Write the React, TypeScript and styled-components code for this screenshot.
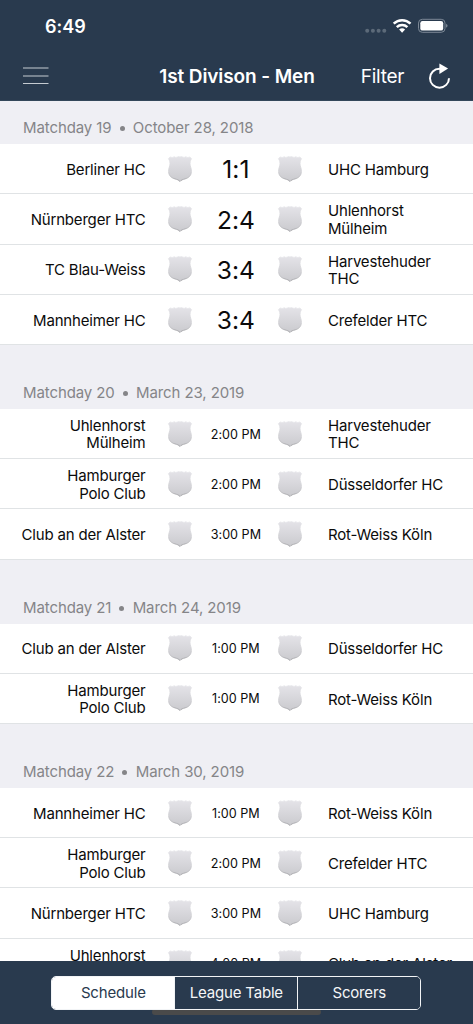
import React from 'react';
import styled, { createGlobalStyle } from 'styled-components';

const GlobalStyle = createGlobalStyle`
  * { box-sizing: border-box; }
  body { margin: 0; background: #efeff4; }
`;

const navy = '#293a4e';

const Screen = styled.div`
  width: 473px;
  height: 1024px;
  overflow: hidden;
  display: flex;
  flex-direction: column;
  background: #efeff4;
  color: #0b0b0b;
  font-family: Inter, 'Liberation Sans', sans-serif;
  font-feature-settings: 'calt' 0;
`;

const Header = styled.header`
  flex: none;
  height: 101px;
  background: ${navy};
  color: #fff;
  border-bottom: 1px solid #33475a;
`;

const StatusBar = styled.div`
  height: 51px;
  padding: 2px 25px 0 45px;
  display: flex;
  align-items: center;
  justify-content: space-between;
`;

const Clock = styled.span`
  font-size: 18px;
  font-weight: 600;
  letter-spacing: 0;
`;

const NavBar = styled.div`
  height: 49px;
  padding: 0 22px 0 23px;
  display: grid;
  grid-template-columns: 92px 244px 1fr auto;
  align-items: center;
`;

const Title = styled.h1`
  margin: 0;
  padding-top: 2px;
  text-align: center;
  white-space: nowrap;
  font-size: 19px;
  font-weight: 600;
  letter-spacing: -0.1px;
`;

const FilterLabel = styled.span`
  font-size: 19px;
  letter-spacing: -0.25px;
  padding: 2px 0 0 1.7px;
`;

const List = styled.main`
  flex: 1;
  min-height: 0;
  overflow: hidden;
`;

const SectionHeader = styled.div<{ $first?: boolean }>`
  height: ${p => (p.$first ? '43.2px' : '63.9px')};
  padding: 0 23px 7px;
  display: flex;
  align-items: flex-end;
  gap: 8px;
  color: #858588;
  font-size: 15px;
  line-height: 18px;
  letter-spacing: -0.1px;
`;

const Bullet = styled.i`
  width: 5px;
  height: 5px;
  margin: 0 0.3px 6px 0;
  border-radius: 50%;
  background: #858588;
`;

const Row = styled.div`
  height: 50.24px;
  display: grid;
  grid-template-columns: 145.5px 69.4px 42px 65.6px 1fr;
  align-items: center;
  background: #fff;
  border-bottom: 1px solid #e0e3e5;
`;

const Team = styled.div<{ $home?: boolean }>`
  text-align: ${p => (p.$home ? 'right' : 'left')};
  font-size: 15px;
  line-height: 17.4px;
  letter-spacing: -0.18px;
  white-space: pre;
  padding: 1.6px 0 0 ${p => (p.$home ? '0' : '5.5px')};
`;

const Crest = styled.svg`
  display: block;
  width: 26px;
  height: 28px;
  justify-self: center;
`;

const Result = styled.div<{ $score: boolean }>`
  justify-self: center;
  white-space: nowrap;
  padding-top: 1px;
  font-size: ${p => (p.$score ? '24.6px' : '12.6px')};
  letter-spacing: 0;
`;

const Footer = styled.footer`
  position: relative;
  flex: none;
  height: 63px;
  padding-top: 14.5px;
  background: ${navy};
`;

const Segments = styled.div`
  position: relative;
  z-index: 1;
  width: 370px;
  height: 34px;
  margin-left: 51.3px;
  display: grid;
  grid-template-columns: 122px 123px 1fr;
  border: 1px solid #f2f4f6;
  border-radius: 5px;
  overflow: hidden;
`;

const Segment = styled.div<{ $active?: boolean }>`
  display: flex;
  align-items: center;
  justify-content: center;
  font-size: 15px;
  letter-spacing: -0.18px;
  color: ${p => (p.$active ? navy : '#f5f6f8')};
  background: ${p => (p.$active ? '#fff' : navy)};
  & + & { border-left: 1px solid #f2f4f6; }
`;

const HomeIndicator = styled.div`
  position: absolute;
  left: 152px;
  top: 48px;
  width: 169px;
  height: 6px;
  border-radius: 3px;
  background: #4a4a4a;
`;

const StatusIcons = () => (
  <svg width="86" height="18" viewBox="0 0 86 18">
    <g fill="#5c6a79">
      <circle cx="5.2" cy="12.8" r="2" />
      <circle cx="10.9" cy="12.8" r="2" />
      <circle cx="16.6" cy="12.8" r="2" />
      <circle cx="22.3" cy="12.8" r="2" />
    </g>
    <g fill="none" stroke="#fff" strokeWidth="2.5">
      <path d="M31.7 5.7a12 12 0 0 1 16.8 0" />
      <path d="M34.8 9.2a7.7 7.7 0 0 1 10.6 0" />
    </g>
    <path d="M37.1 11.6a4.5 4.5 0 0 1 6 0l-3 3.1z" fill="#fff" />
    <rect x="56.5" y="1.3" width="26.5" height="13" rx="3.8" fill="none" stroke="#7c8896" />
    <rect x="58.3" y="3.1" width="22.9" height="9.5" rx="2.2" fill="#fff" />
    <path d="M84.2 5.8q2.6 2 0 4z" fill="#8a95a1" />
  </svg>
);

const MenuIcon = () => (
  <svg width="26" height="18" viewBox="0 0 26 18">
    <path d="M0 1h25.5M0 9h25.500M0 16.500h25.500" stroke="#c5cbd1" strokeWidth="1.2" />
  </svg>
);

const ReloadIcon = () => (
  <svg width="24" height="28" viewBox="0 0 24 28">
    <path d="M13.5 6.7H12.5A9.500 9.500 0 1 0 22 16.200" fill="none" stroke="#fff" strokeWidth="2" />
    <path d="M12.400 1.600v10.400l8.700-5.400z" fill="#fff" />
  </svg>
);

const Shield = () => (
  <Crest viewBox="0 0 26 28">
    <path
      d="M3.200 1.900Q5.200 3.400 7.200 1.700Q8.800 3 10.400 2Q11.700 1.200 13 2Q14.300 1.200 15.600 2Q17.200 3 18.800 1.700Q20.800 3.400 22.800 1.900L24.500 3.700Q22.800 6 23 8.800C23.100 11.500 24.500 13 24.400 16.500C24.300 21 21.200 23 18 23.900C15.800 24.400 14 25.200 13 26.500C12 25.200 10.200 24.400 8 23.900C4.800 23 1.700 21 1.600 16.500C1.500 13 2.900 11.500 3 8.800Q3.200 6 1.500 3.700Z"
      fill="url(#crest)"
      stroke="url(#crestEdge)"
      strokeWidth=".8"
    />
  </Crest>
);

const Gradients = () => (
  <svg width="0" height="0" display="block">
    <defs>
      <linearGradient id="crest" x1="0" y1="0" x2="0" y2="1">
        <stop offset="0" stopColor="#e4e3e8" />
        <stop offset="1" stopColor="#cacace" />
      </linearGradient>
      <linearGradient id="crestEdge" x1="0" y1="0" x2="0" y2="1">
        <stop offset="0" stopColor="#e6e6ea" />
        <stop offset=".6" stopColor="#cfcfd3" />
        <stop offset="1" stopColor="#97979b" />
      </linearGradient>
    </defs>
  </svg>
);

type Match = [home: string, result: string, away: string];

const days: { day: string; date: string; matches: Match[] }[] = [
  {
    day: 'Matchday 19',
    date: 'October 28, 2018',
    matches: [
      ['Berliner HC', '1:1', 'UHC Hamburg'],
      ['Nürnberger HTC', '2:4', 'Uhlenhorst\nMülheim'],
      ['TC Blau-Weiss', '3:4', 'Harvestehuder\nTHC'],
      ['Mannheimer HC', '3:4', 'Crefelder HTC'],
    ],
  },
  {
    day: 'Matchday 20',
    date: 'March 23, 2019',
    matches: [
      ['Uhlenhorst\nMülheim', '2:00 PM', 'Harvestehuder\nTHC'],
      ['Hamburger\nPolo Club', '2:00 PM', 'Düsseldorfer HC'],
      ['Club an der Alster', '3:00 PM', 'Rot-Weiss Köln'],
    ],
  },
  {
    day: 'Matchday 21',
    date: 'March 24, 2019',
    matches: [
      ['Club an der Alster', '1:00 PM', 'Düsseldorfer HC'],
      ['Hamburger\nPolo Club', '1:00 PM', 'Rot-Weiss Köln'],
    ],
  },
  {
    day: 'Matchday 22',
    date: 'March 30, 2019',
    matches: [
      ['Mannheimer HC', '1:00 PM', 'Rot-Weiss Köln'],
      ['Hamburger\nPolo Club', '2:00 PM', 'Crefelder HTC'],
      ['Nürnberger HTC', '3:00 PM', 'UHC Hamburg'],
      ['Uhlenhorst\nMülheim', '4:00 PM', 'Club an der Alster'],
    ],
  },
];

export default function App() {
  return (
    <Screen>
      <GlobalStyle />
      <Gradients />
      <Header>
        <StatusBar>
          <Clock>6:49</Clock>
          <StatusIcons />
        </StatusBar>
        <NavBar>
          <MenuIcon />
          <Title>1st Divison - Men</Title>
          <FilterLabel>Filter</FilterLabel>
          <ReloadIcon />
        </NavBar>
      </Header>
      <List>
        {days.map((d, i) => (
          <section key={d.day}>
            <SectionHeader $first={i === 0}>
              <span>{d.day}</span>
              <Bullet />
              <span>{d.date}</span>
            </SectionHeader>
            {d.matches.map(([home, result, away]) => (
              <Row key={home}>
                <Team $home>{home}</Team>
                <Shield />
                <Result $score={!result.includes('M')}>{result}</Result>
                <Shield />
                <Team>{away}</Team>
              </Row>
            ))}
          </section>
        ))}
      </List>
      <Footer>
        <Segments>
          <Segment $active>Schedule</Segment>
          <Segment>League Table</Segment>
          <Segment>Scorers</Segment>
        </Segments>
        <HomeIndicator />
      </Footer>
    </Screen>
  );
}
